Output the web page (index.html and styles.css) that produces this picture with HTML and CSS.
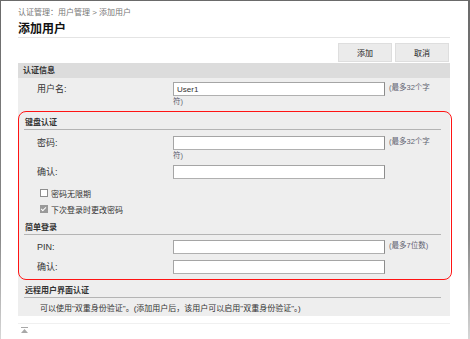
FILE: index.html
```html
<!DOCTYPE html>
<html lang="zh-CN">
<head>
  <meta charset="UTF-8" />
  <title>添加用户</title>
  <link rel="stylesheet" href="styles.css">
</head>
<body>
  <div class="window">
    <div class="page">
      <div class="crumb">认证管理：用户管理 &gt; 添加用户</div>
      <h1 class="title">添加用户</h1>
      <div class="actions">
        <button class="btn">添加</button>
        <button class="btn">取消</button>
      </div>

      <div class="panel">
        <div class="bar">认证信息</div>
        <div class="row first">
          <label class="label">用户名:</label>
          <div class="field"><input class="text" value="User1"><span class="hint">(最多32个字符)</span></div>
        </div>

        <div class="group">
          <div class="sub">键盘认证</div>
          <div class="row pwd">
            <label class="label">密码:</label>
            <div class="field"><input class="text" type="password"><span class="hint">(最多32个字符)</span></div>
          </div>
          <div class="row confirm">
            <label class="label">确认:</label>
            <div class="field"><input class="text" type="password"></div>
          </div>
          <div class="checks">
            <label class="check"><span class="box"></span>密码无限期</label>
            <label class="check"><span class="box on"></span>下次登录时更改密码</label>
          </div>

          <div class="sub">简单登录</div>
          <div class="row pin">
            <label class="label">PIN:</label>
            <div class="field"><input class="text"><span class="hint">(最多7位数)</span></div>
          </div>
          <div class="row pin-confirm">
            <label class="label">确认:</label>
            <div class="field"><input class="text"></div>
          </div>
        </div>

        <div class="sub remote">远程用户界面认证</div>
        <p class="note">可以使用"双重身份验证"。(添加用户后，该用户可以启用"双重身份验证"。)</p>
      </div>

      <div class="foot">
        <svg width="7" height="6" viewBox="0 0 7 6">
          <rect x="0" y="0" width="7" height="1" fill="#a8a8a8"/>
          <polygon points="3.5,2 7,6 0,6" fill="#a8a8a8"/>
        </svg>
      </div>
    </div>
  </div>
</body>
</html>
```

FILE: styles.css
```css
body {
  margin: 0;
  font-family: "Liberation Sans", "Noto Sans CJK SC", sans-serif;
  color: #333;
  background: #fff;
}

.window {
  height: 338px;
  border-style: solid;
  border-width: 1px 2px 0 1px;
  border-image: linear-gradient(#6a6a6a 0%, #8a8a8a 70%, #d8d8d8 100%) 1;
}

.page {
  padding: 0 18px 0 17px;
}

.crumb {
  margin-top: 6px;
  font-size: 8px;
  line-height: 12px;
  color: #777;
}

.title {
  margin: 2px 0 0;
  font-size: 12px;
  line-height: 16px;
  font-weight: bold;
  color: #111;
  border-bottom: 1px solid #e4e4e4;
}

.actions {
  display: flex;
  justify-content: flex-end;
  gap: 3px;
  margin-top: 5px;
  padding-right: 1px;
}

.btn {
  width: 54px;
  height: 19px;
  padding: 0;
  font-family: inherit;
  font-size: 8px;
  color: #222;
  background: #ebebeb;
  border: 1px solid #dedede;
}

.panel {
  margin-top: 1px;
  padding-bottom: 1px;
  background: #eeeeee;
}

.bar {
  height: 15px;
  line-height: 15px;
  padding-left: 5px;
  font-size: 8px;
  font-weight: bold;
  color: #333;
  background: #dcdcdc;
}

.row {
  display: flex;
}

.row.first { margin-top: 4px; }
.row.pwd { margin-top: 6px; }
.row.confirm { margin-top: 3px; }
.row.pin { margin-top: 5px; }
.row.pin-confirm { margin-top: 6px; }

.label {
  width: 136px;
  padding-left: 19px;
  font-size: 9px;
  line-height: 14px;
  color: #333;
}

.field {
  width: 260px;
  font-size: 7.5px;
  line-height: 12px;
}

.text {
  box-sizing: border-box;
  width: 212px;
  height: 14px;
  margin: 0 4px 0 0;
  padding: 0 3px;
  vertical-align: top;
  font-family: inherit;
  font-size: 8px;
  color: #333;
  background: #fff;
  border: 1px solid;
  border-color: #a5a5a5 #8c8c8c #b0b0b0 #a5a5a5;
  border-radius: 0;
}

.hint {
  color: #5e6270;
}

.group {
  position: relative;
}

.group::after {
  content: "";
  position: absolute;
  top: -6px;
  bottom: -6px;
  left: 0;
  right: -2px;
  border: 1.5px solid #ff1414;
  border-radius: 8px;
  pointer-events: none;
}

.sub {
  margin: 9px 9px 0 6px;
  padding-left: 1px;
  font-size: 8px;
  line-height: 12px;
  font-weight: bold;
  color: #333;
  border-bottom: 1px solid #b4b4b4;
}

.checks + .sub { margin-top: 5px; }
.sub.remote { margin-top: 11px; }

.checks {
  margin-top: 6px;
  padding-left: 22px;
}

.check {
  display: flex;
  align-items: center;
  height: 16px;
  font-size: 8px;
  color: #333;
}

.box {
  box-sizing: border-box;
  width: 8px;
  height: 8px;
  margin-right: 3px;
  background: #fff;
  border: 1px solid #8e8e8e;
  position: relative;
}

.box.on {
  background: #9a9a9a;
  border-color: #9a9a9a;
}

.box.on::after {
  content: "";
  position: absolute;
  left: 1px;
  top: 0;
  width: 2px;
  height: 4px;
  border: solid #fff;
  border-width: 0 1px 1px 0;
  transform: rotate(45deg);
}

.note {
  margin: 5px 0 0;
  padding-left: 22px;
  font-size: 8px;
  line-height: 12px;
  color: #333;
}

.foot {
  margin-top: 7px;
  padding: 3px 0 0 3px;
  border-top: 1px solid #f0f0f0;
  line-height: 0;
}
```
